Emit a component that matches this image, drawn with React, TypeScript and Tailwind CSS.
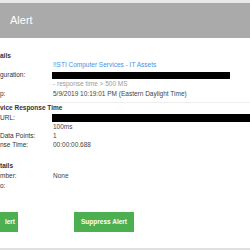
import { ReactNode } from "react";

type RowProps = {
    label: string,
    h?: string,
    children?: ReactNode,
}

const Row = ({ label, h = "h-[9px]", children }: RowProps) => {
    return <div className={`flex items-center ${h}`}>
        <div className="w-[53px] shrink-0 text-[#333]">{label}</div>
        <div className="flex-1 min-w-0 text-[#444] whitespace-nowrap">{children}</div>
    </div>
}

const Bar = ({ w }: { w: string }) => <div className={`${w} bg-black -ml-[1px]`} />

export default function App() {
    return <div className="w-[250px] h-[250px] bg-white overflow-hidden flex flex-col font-['Liberation_Sans',Arial,sans-serif] text-[6.5px] leading-none">
        <div className="h-[3px] bg-[#e8e8e8]" />
        <div className="h-[35px] bg-[#aaaaaa] flex items-center pl-[10px] text-white text-[11px]">Alert</div>

        <div className="flex flex-col pt-[14px]">
            <div className="h-[9px] flex items-center font-bold text-[#333]">ails</div>
            <Row label=""><span className="text-[#4a90e2]">!!STI Computer Services - IT Assets</span></Row>
            <Row label="guration:" h="h-[10px]"><Bar w="w-[178px] h-[7px]" /></Row>
            <Row label=""><span className="text-[#9a9a9a]">- response time &gt; 500 MS</span></Row>
            <Row label="p:" h="h-[10px]">5/9/2019 10:19:01 PM (Eastern Daylight Time)</Row>
            <div className="h-px bg-[#eeeeee] mt-[3px]" />
            <div className="h-[10px] flex items-center font-bold text-[#333]">vice Response Time</div>
            <Row label="URL:" h="h-[10px]"><Bar w="w-[200px] h-[8px]" /></Row>
            <Row label="">100ms</Row>
            <Row label="Data Points:">1</Row>
            <Row label="nse Time:">00:00:00.688</Row>

            <div className="h-[10px] mt-[11px] flex items-center font-bold text-[#333]">tails</div>
            <Row label="mber:" h="h-[10px]">None</Row>
            <Row label="o:" h="h-[10px]" />

            <div className="flex items-center mt-[21px] h-[20px]">
                <div className="w-[18px] h-full bg-[#4caf50] text-white font-bold flex items-center justify-end pr-[3px]">lert</div>
                <div className="ml-[56px] w-[60px] h-full bg-[#4caf50] text-white font-bold flex items-center justify-center">Suppress Alert</div>
            </div>
        </div>
        <div className="mt-auto h-[2px] bg-[#e0e0e0]" />
    </div>
}
